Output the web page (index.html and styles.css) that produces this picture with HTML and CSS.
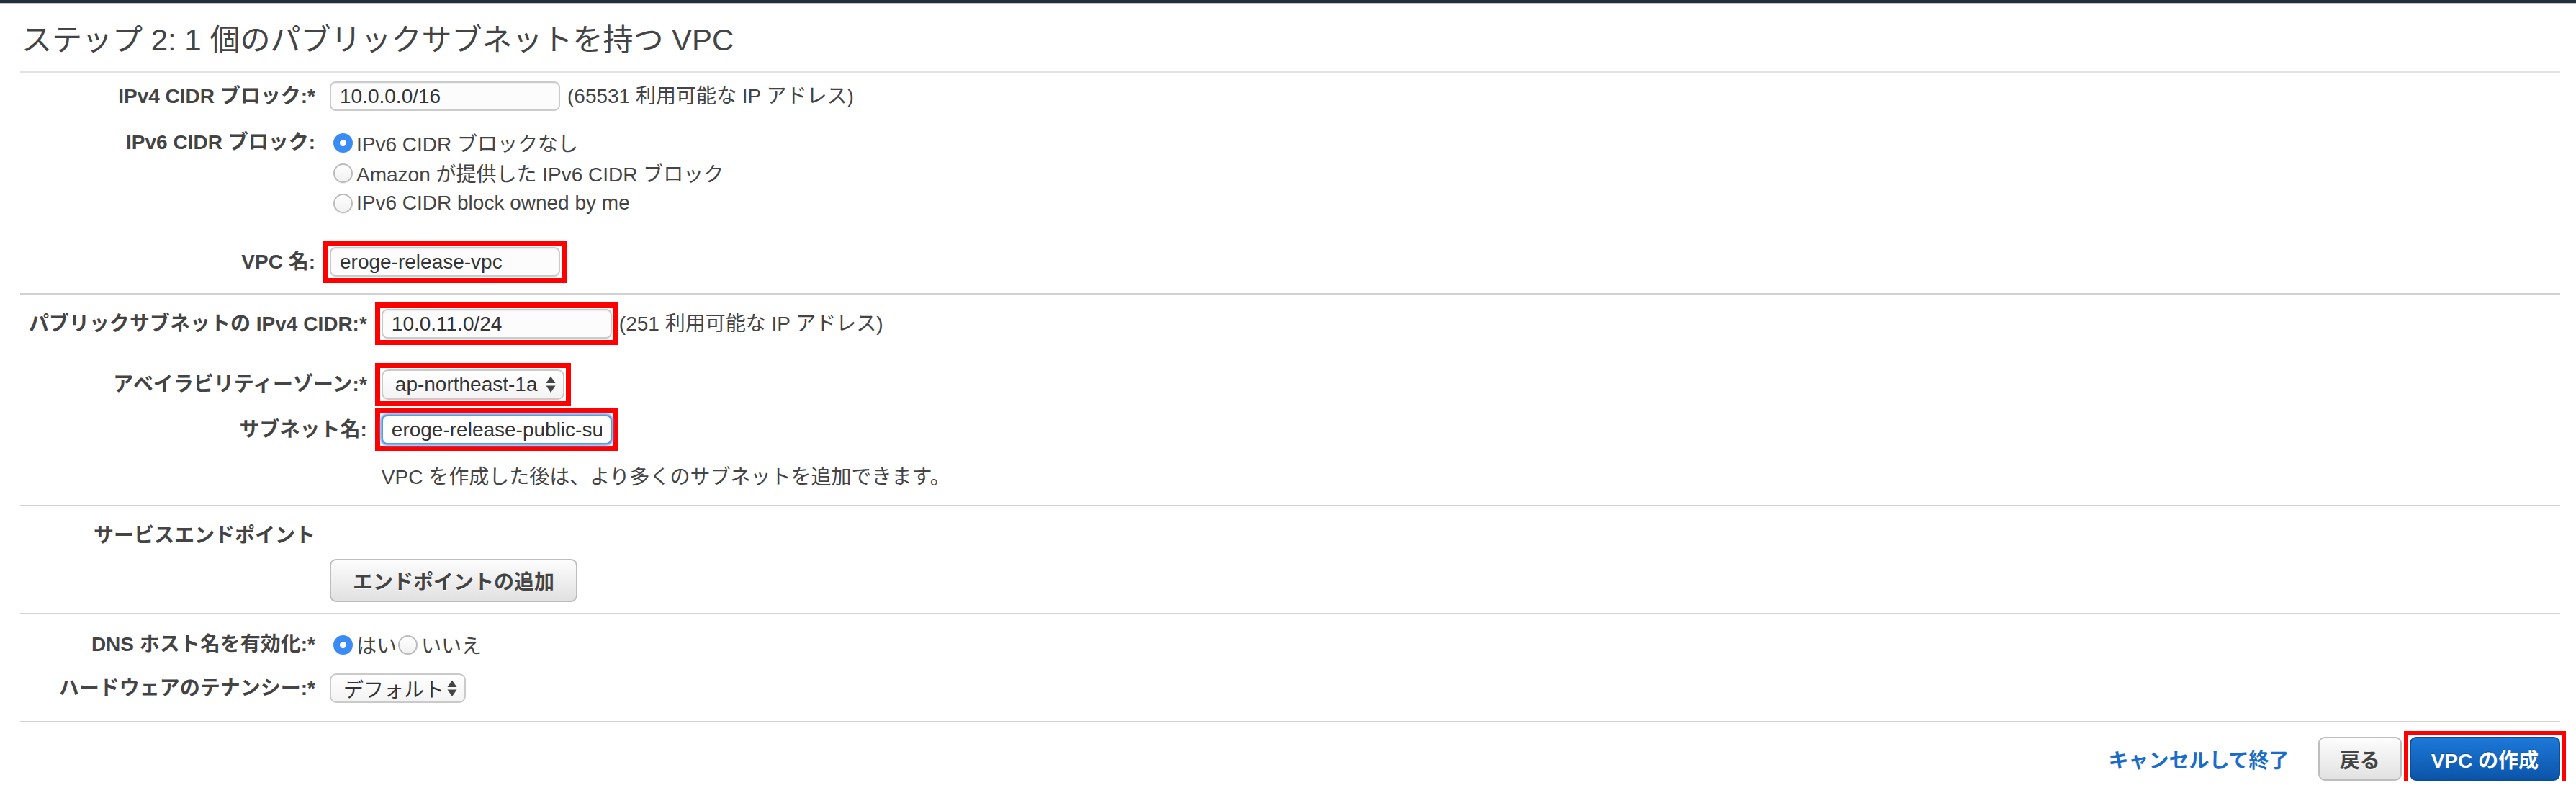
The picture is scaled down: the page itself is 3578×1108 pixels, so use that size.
FILE: index.html
```html
<!DOCTYPE html>
<html lang="ja">
<head>
<meta charset="utf-8">
<title>ステップ 2: 1 個のパブリックサブネットを持つ VPC</title>
<link rel="stylesheet" href="styles.css">
</head>
<body>
<div class="topbar"></div>
<main class="wizard">
  <h1 class="title">ステップ 2: 1 個のパブリックサブネットを持つ VPC</h1>

  <section class="section section--vpc">
    <div class="row">
      <label class="label">IPv4 CIDR ブロック:*</label>
      <div class="control">
        <input class="text-input" type="text" value="10.0.0.0/16">
        <span class="hint">(65531 利用可能な IP アドレス)</span>
      </div>
    </div>
    <div class="row row--radios">
      <label class="label label--top">IPv6 CIDR ブロック:</label>
      <div class="radio-list">
        <label class="radio"><input class="radio-input" type="radio" name="ipv6" checked>IPv6 CIDR ブロックなし</label>
        <label class="radio"><input class="radio-input" type="radio" name="ipv6">Amazon が提供した IPv6 CIDR ブロック</label>
        <label class="radio"><input class="radio-input" type="radio" name="ipv6">IPv6 CIDR block owned by me</label>
      </div>
    </div>
    <div class="row row--vpcname">
      <label class="label">VPC 名:</label>
      <div class="control">
        <span class="mark"><input class="text-input" type="text" value="eroge-release-vpc"></span>
      </div>
    </div>
  </section>

  <section class="section section--subnet">
    <div class="row">
      <label class="label">パブリックサブネットの IPv4 CIDR:*</label>
      <div class="control">
        <span class="mark"><input class="text-input" type="text" value="10.0.11.0/24"></span>
        <span class="hint">(251 利用可能な IP アドレス)</span>
      </div>
    </div>
    <div class="row row--az">
      <label class="label">アベイラビリティーゾーン:*</label>
      <div class="control">
        <span class="mark">
          <span class="select select--az">
            <span class="select__value">ap-northeast-1a</span>
            <svg class="select__arrows" width="14" height="24" viewBox="0 0 14 24" aria-hidden="true"><path d="M7 0.5 L13.5 10 L0.5 10 Z" fill="#444"/><path d="M0.5 13.5 L13.5 13.5 L7 23 Z" fill="#444"/></svg>
          </span>
        </span>
      </div>
    </div>
    <div class="row row--subnetname">
      <label class="label">サブネット名:</label>
      <div class="control">
        <span class="mark"><input class="text-input text-input--focus" type="text" value="eroge-release-public-subnet"></span>
      </div>
    </div>
    <div class="row row--help">
      <span></span>
      <p class="help">VPC を作成した後は、より多くのサブネットを追加できます。</p>
    </div>
  </section>

  <section class="section section--endpoint">
    <div class="row">
      <span class="label">サービスエンドポイント</span>
      <span></span>
    </div>
    <div class="row row--endpoint-btn">
      <span></span>
      <div class="control">
        <button class="btn btn--tall" type="button">エンドポイントの追加</button>
      </div>
    </div>
  </section>

  <section class="section section--dns">
    <div class="row row--dns">
      <label class="label">DNS ホスト名を有効化:*</label>
      <div class="control control--inline">
        <label class="radio radio--inline"><input class="radio-input" type="radio" name="dns" checked>はい</label><label class="radio radio--inline"><input class="radio-input" type="radio" name="dns">いいえ</label>
      </div>
    </div>
    <div class="row row--tenancy">
      <label class="label">ハードウェアのテナンシー:*</label>
      <div class="control">
        <span class="select select--tenancy">
          <span class="select__value">デフォルト</span>
          <svg class="select__arrows" width="14" height="24" viewBox="0 0 14 24" aria-hidden="true"><path d="M7 0.5 L13.5 10 L0.5 10 Z" fill="#444"/><path d="M0.5 13.5 L13.5 13.5 L7 23 Z" fill="#444"/></svg>
        </span>
      </div>
    </div>
  </section>

  <footer class="actions">
    <a class="cancel-link" href="#">キャンセルして終了</a>
    <button class="btn" type="button">戻る</button>
    <span class="mark mark--btn"><button class="btn btn--primary" type="button">VPC の作成</button></span>
  </footer>
</main>
</body>
</html>
```

FILE: styles.css
```css
* {
  box-sizing: border-box;
}

html,
body {
  margin: 0;
  padding: 0;
  background: #ffffff;
}

body {
  font-family: "Liberation Sans", "Noto Sans CJK JP", sans-serif;
  font-size: 28px;
  color: #444444;
}

.topbar {
  height: 6px;
  background: #232f3e;
  border-bottom: 2px solid #c6c6c6;
}

.wizard {
  margin: 0 22px 0 28px;
}

.title {
  margin: 25px 0 17px;
  padding-left: 2px;
  font-size: 42px;
  font-weight: normal;
  line-height: 50px;
  color: #444444;
}

/* ---------- sections ---------- */

.section {
  display: grid;
  grid-template-columns: minmax(398px, max-content) 1fr;
  column-gap: 20px;
  padding-left: 12px;
  border-top: 2px solid #d2d2d2;
}

.row {
  grid-column: 1 / -1;
  display: grid;
  grid-template-columns: subgrid;
  align-items: center;
}

.section--vpc {
  border-top: 4px solid #e3e3e3;
  padding-top: 11px;
  padding-bottom: 23px;
}

.row--radios {
  margin-top: 23px;
  align-items: start;
}

.row--vpcname {
  margin-top: 40px;
}

.section--subnet {
  padding-top: 20px;
  padding-bottom: 21px;
}

.row--az {
  margin-top: 43px;
}

.row--subnetname {
  margin-top: 21px;
}

.row--help {
  margin-top: 29px;
}

.section--endpoint {
  padding-top: 24px;
  padding-bottom: 15px;
}

.row--endpoint-btn {
  margin-top: 15px;
}

.section--dns {
  padding-top: 22px;
  padding-bottom: 25px;
}

.row--tenancy {
  margin-top: 20px;
}

/* ---------- labels & text ---------- */

.label {
  font-weight: bold;
  text-align: right;
  line-height: 34px;
  white-space: nowrap;
  color: #444444;
}

.label--top {
  line-height: 42px;
}

.control {
  display: flex;
  align-items: center;
}

.hint {
  margin-left: 10px;
  line-height: 34px;
  white-space: nowrap;
}

.help {
  margin: 0;
  line-height: 34px;
}

/* ---------- red annotation boxes ---------- */

.mark {
  display: inline-flex;
  margin: -9px;
  padding: 2px;
  border: 7px solid #ff0000;
  background: #ffffff;
}

.mark--btn {
  margin: -8px -8px -8px 3px;
  padding: 2px;
  border-width: 6px;
}

/* ---------- inputs ---------- */

.text-input {
  width: 320px;
  height: 41px;
  padding: 0 12px;
  border: 2px solid #cbcbcb;
  border-radius: 8px;
  background: #fcfcfc;
  box-shadow: inset 0 1px 2px rgba(0, 0, 0, 0.06);
  font: inherit;
  color: #333333;
}

.text-input--focus {
  border-color: #5a9be0;
  background: #ffffff;
  box-shadow: 0 0 3px 2px rgba(91, 155, 235, 0.85);
  outline: none;
}

/* ---------- selects ---------- */

.select {
  display: flex;
  align-items: center;
  justify-content: space-between;
  height: 42px;
  padding: 0 10px 0 17px;
  border: 2px solid #cacaca;
  border-radius: 9px;
  background: linear-gradient(#ffffff, #f3f3f3);
  color: #333333;
  white-space: nowrap;
}

.select--az {
  width: 254px;
}

.select--tenancy {
  width: 189px;
  height: 41px;
}

.select__arrows {
  flex: none;
  display: block;
}

/* ---------- radios ---------- */

.radio-list {
  display: flex;
  flex-direction: column;
}

.radio {
  display: flex;
  align-items: center;
  height: 42px;
  white-space: nowrap;
  color: #444444;
}

.control--inline {
  height: 40px;
}

.radio--inline {
  display: inline-flex;
  height: 40px;
}

.radio-input {
  appearance: none;
  -webkit-appearance: none;
  flex: none;
  width: 27px;
  height: 27px;
  margin: 0 5px 0 5px;
  border: 2px solid #bcbcbc;
  border-radius: 50%;
  background: linear-gradient(#ffffff, #f1f1f1);
  box-shadow: 0 1px 1px rgba(0, 0, 0, 0.08);
}

.radio-input:checked {
  border: none;
  background: radial-gradient(circle, #ffffff 0 4px, #3b8bf5 5px);
}

.radio--inline + .radio--inline .radio-input {
  margin-left: 2px;
}

/* ---------- buttons ---------- */

.btn {
  height: 61px;
  padding: 0 28px;
  border: 2px solid #bdbdbd;
  border-radius: 9px;
  background: linear-gradient(#fdfdfd, #e1e1e1);
  font-family: inherit;
  font-size: 28px;
  font-weight: bold;
  color: #444444;
  text-shadow: 0 1px 0 #ffffff;
  white-space: nowrap;
}

.btn--tall {
  height: 60px;
  padding: 0 30px;
}

.btn--primary {
  border-color: #0a4f9e;
  background: linear-gradient(#1d78d8, #0b55a9);
  color: #ffffff;
  text-shadow: 0 -1px 0 rgba(0, 0, 0, 0.3);
}

/* ---------- footer ---------- */

.actions {
  display: flex;
  justify-content: flex-end;
  align-items: center;
  padding-top: 20px;
  border-top: 2px solid #d2d2d2;
}

.cancel-link {
  margin-right: 40px;
  font-weight: bold;
  color: #1b6cc8;
  text-decoration: none;
  white-space: nowrap;
}
```
